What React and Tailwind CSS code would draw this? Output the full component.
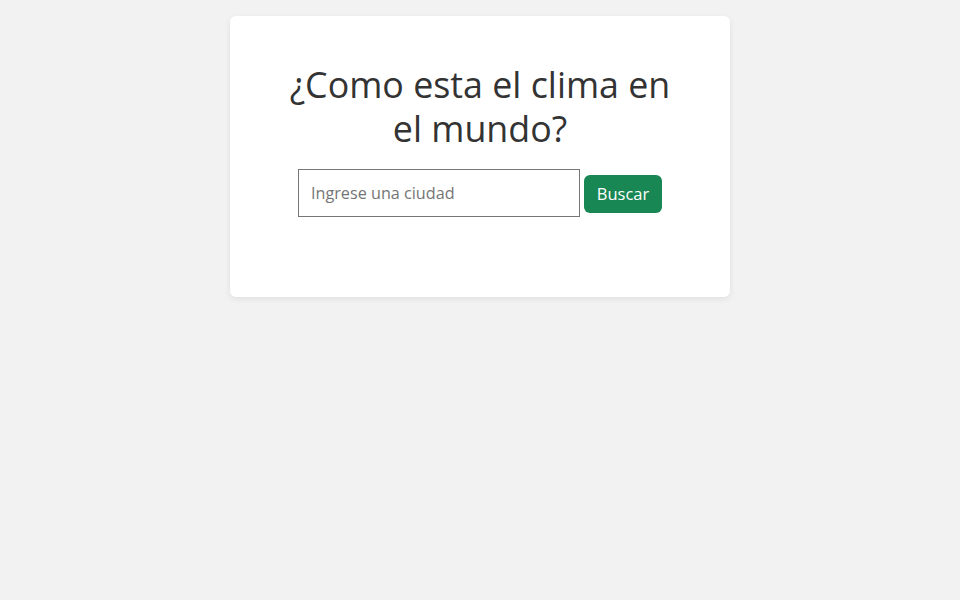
import React, { useState } from 'react';

const App = () => {
  const [city, setCity] = useState('');

  return (
    <div className="min-h-screen w-full bg-[#f2f2f2] pt-4 font-['Open_Sans',sans-serif] text-[#333333]">
      <div className="mx-auto w-[500px] rounded-md bg-white px-12 pt-[46px] pb-20 shadow-[0_2px_6px_rgba(0,0,0,0.08)]">
        {/* Title */}
        <h1 className="text-center text-[35.8px] leading-[44px] font-normal">
          ¿Como esta el clima en el mundo?
        </h1>

        {/* Search */}
        <div className="mt-[19px] flex items-center justify-center gap-1">
          <input
            type="text"
            value={city}
            onChange={(e) => setCity(e.target.value)}
            placeholder="Ingrese una ciudad"
            className="h-12 w-[282px] border border-[#767676] px-3 text-[16.2px] text-[#333] placeholder:text-[#757575] focus:outline-none"
          />
          <button className="mt-0.5 h-[38px] w-[78px] rounded-md bg-[#198754] text-[16.5px] text-white">
            Buscar
          </button>
        </div>
      </div>
    </div>
  );
};

export default App;
